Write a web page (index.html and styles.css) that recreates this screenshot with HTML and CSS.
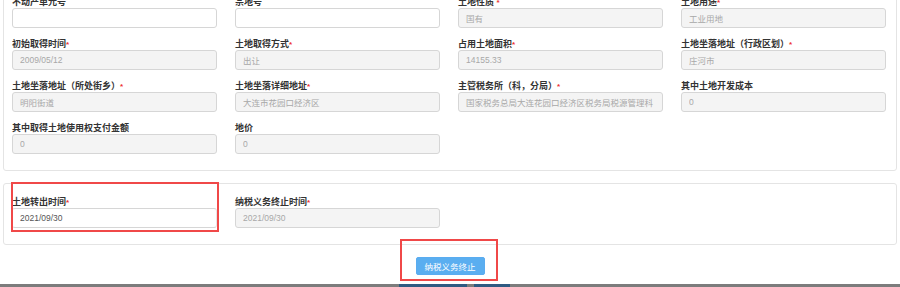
FILE: index.html
```html
<html>
  <head>
    <meta charset="utf-8" />
    <meta name="viewport" content="width=device-width, initial-scale=1" />
    <link rel="stylesheet" href="styles.css">
  </head>
  <body>
    <div class="page">
      <div class="panel panel-first">
        <div class="form-grid">
          <div class="field">
            <label>不动产单元号</label>
            <input class="ctl" type="text" value="" />
          </div>
          <div class="field">
            <label>宗地号</label>
            <input class="ctl" type="text" value="" />
          </div>
          <div class="field">
            <label>土地性质 <span class="req">*</span></label>
            <input class="ctl" type="text" value="国有" disabled />
          </div>
          <div class="field">
            <label>土地用途<span class="req">*</span></label>
            <input class="ctl" type="text" value="工业用地" disabled />
          </div>

          <div class="field">
            <label>初始取得时间<span class="req">*</span></label>
            <input class="ctl" type="text" value="2009/05/12" disabled />
          </div>
          <div class="field">
            <label>土地取得方式<span class="req">*</span></label>
            <input class="ctl" type="text" value="出让" disabled />
          </div>
          <div class="field">
            <label>占用土地面积<span class="req">*</span></label>
            <input class="ctl" type="text" value="14155.33" disabled />
          </div>
          <div class="field">
            <label>土地坐落地址（行政区划）<span class="req">*</span></label>
            <input class="ctl" type="text" value="庄河市" disabled />
          </div>

          <div class="field">
            <label>土地坐落地址（所处街乡）<span class="req">*</span></label>
            <input class="ctl" type="text" value="明阳街道" disabled />
          </div>
          <div class="field">
            <label>土地坐落详细地址<span class="req">*</span></label>
            <input class="ctl" type="text" value="大连市花园口经济区" disabled />
          </div>
          <div class="field">
            <label>主管税务所（科，分局）<span class="req">*</span></label>
            <input class="ctl" type="text" value="国家税务总局大连花园口经济区税务局税源管理科" disabled />
          </div>
          <div class="field">
            <label>其中土地开发成本</label>
            <input class="ctl" type="text" value="0" disabled />
          </div>

          <div class="field">
            <label>其中取得土地使用权支付金额</label>
            <input class="ctl" type="text" value="0" disabled />
          </div>
          <div class="field">
            <label>地价</label>
            <input class="ctl" type="text" value="0" disabled />
          </div>
        </div>
      </div>

      <div class="panel">
        <div class="form-grid">
          <div class="field">
            <label>土地转出时间<span class="req">*</span></label>
            <input class="ctl ctl-active" type="text" value="2021/09/30" />
          </div>
          <div class="field">
            <label>纳税义务终止时间<span class="req">*</span></label>
            <input class="ctl" type="text" value="2021/09/30" disabled />
          </div>
        </div>
      </div>

      <div class="actions">
        <button class="btn-primary" type="button">纳税义务终止</button>
      </div>

      <div class="taskbar">
        <span class="task task-a"></span>
        <span class="task task-b"></span>
      </div>

      <!-- highlight marks -->
      <div class="mark mark-field"></div>
      <div class="mark mark-button"></div>
    </div>
  </body>
</html>
```

FILE: styles.css
```css
body {
  margin: 0;
  background: #fff;
  font-family: "Liberation Sans", "Noto Sans CJK SC", sans-serif;
  overflow: hidden;
}
.page {
  position: relative;
  width: 900px;
  height: 287px;
  overflow: hidden;
}
.panel {
  margin: 12px 3px 0 3px;
  padding: 12px 10px 6px 8px;
  border: 1px solid #e4e4e4;
  border-radius: 3px;
}
.panel-first {
  margin-top: -17px;
}
.form-grid {
  display: grid;
  grid-template-columns: repeat(4, 205px);
  column-gap: 18px;
}
.field {
  margin-bottom: 10px;
}
.field label {
  display: block;
  height: 12px;
  line-height: 12px;
  font-size: 9px;
  font-weight: 700;
  color: #333;
  white-space: nowrap;
}
.field .req {
  color: #e33;
  font-size: 8px;
}
.ctl {
  display: block;
  box-sizing: border-box;
  width: 205px;
  height: 20px;
  margin: 0;
  padding: 0 7px;
  border: 1px solid #d6d6d6;
  border-radius: 3px;
  background: #fff;
  font-family: "Liberation Sans", "Noto Sans CJK SC", sans-serif;
  font-size: 8.5px;
  color: #555;
  outline: none;
}
.ctl[disabled] {
  background: #f4f4f4;
  color: #a8a8a8;
}
.ctl-active {
  border-left-color: #fff;
  border-right-color: #e6e6e6;
}
.actions {
  display: flex;
  justify-content: center;
  margin-top: 12px;
}
.btn-primary {
  width: 69px;
  height: 18px;
  padding: 0;
  border: 1px solid #5aacf0;
  border-radius: 2px;
  background: #5aaef0;
  color: #fff;
  font-family: "Noto Sans CJK SC", sans-serif;
  font-size: 8.5px;
}
.taskbar {
  display: flex;
  gap: 7px;
  margin-top: 9px;
  padding-left: 399px;
  height: 3px;
  background: #7c7c7c;
}
.task {
  height: 3px;
  background: #2f5a82;
}
.task-a {
  width: 68px;
}
.task-b {
  width: 36px;
}
.mark {
  position: absolute;
  border: 2px solid #f04848;
}
.mark-field {
  left: 11px;
  top: 182px;
  width: 204px;
  height: 46px;
}
.mark-button {
  left: 400px;
  top: 239px;
  width: 94px;
  height: 38px;
}
```
